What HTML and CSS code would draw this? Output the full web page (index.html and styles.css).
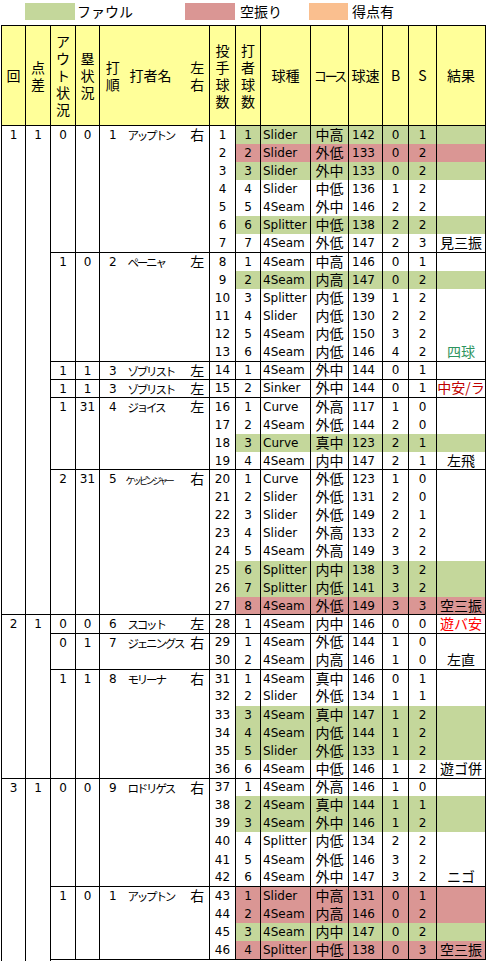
FILE: index.html
```html
<!DOCTYPE html>
<html lang="ja">
<head>
<meta charset="utf-8">
<title>投球記録</title>
<link rel="stylesheet" href="styles.css">
</head>
<body>
<div class="legend">
  <span class="sw sw-foul"></span><span class="lab lab-foul">ファウル</span>
  <span class="sw sw-miss"></span><span class="lab lab-miss">空振り</span>
  <span class="sw sw-score"></span><span class="lab lab-score">得点有</span>
</div>
<table class="sheet">
  <colgroup>
    <col style="width:24px"><col style="width:25px"><col style="width:25px"><col style="width:24px">
    <col style="width:26px"><col style="width:60px"><col style="width:24px"><col style="width:26px">
    <col style="width:25px"><col style="width:50px"><col style="width:38px"><col style="width:34px">
    <col style="width:26px"><col style="width:28px"><col style="width:49px">
  </colgroup>
  <thead>
    <tr>
      <th>回</th><th>点<br>差</th><th>ア<br>ウ<br>ト<br>状<br>況</th><th>塁<br>状<br>況</th>
      <th class="ord">打<br>順</th><th class="nm hn">打者名</th><th class="lr">左<br>右</th>
      <th>投<br>手<br>球<br>数</th><th>打<br>者<br>球<br>数</th><th>球種</th><th class="hc">コース</th>
      <th>球速</th><th>B</th><th>S</th><th>結果</th>
    </tr>
  </thead>
  <tbody>
    <tr class="d gs g"><td class="gc" rowspan="27">1</td><td class="gc" rowspan="27">1</td><td class="gc" rowspan="7">0</td><td class="gc" rowspan="7">0</td><td class="gc ord" rowspan="7">1</td><td class="gc nm" rowspan="7">アップトン</td><td class="gc lr" rowspan="7">右</td><td class="pn">1</td><td>1</td><td class="ty">Slider</td><td class="co">中高</td><td class="sp">142</td><td>0</td><td>1</td><td class="rs"></td></tr>
    <tr class="d r"><td class="pn">2</td><td>2</td><td class="ty">Slider</td><td class="co">外低</td><td class="sp">133</td><td>0</td><td>2</td><td class="rs"></td></tr>
    <tr class="d g"><td class="pn">3</td><td>3</td><td class="ty">Slider</td><td class="co">外中</td><td class="sp">133</td><td>0</td><td>2</td><td class="rs"></td></tr>
    <tr class="d"><td class="pn">4</td><td>4</td><td class="ty">Slider</td><td class="co">中低</td><td class="sp">136</td><td>1</td><td>2</td><td class="rs"></td></tr>
    <tr class="d"><td class="pn">5</td><td>5</td><td class="ty">4Seam</td><td class="co">外中</td><td class="sp">146</td><td>2</td><td>2</td><td class="rs"></td></tr>
    <tr class="d g"><td class="pn">6</td><td>6</td><td class="ty">Splitter</td><td class="co">中低</td><td class="sp">138</td><td>2</td><td>2</td><td class="rs"></td></tr>
    <tr class="d"><td class="pn">7</td><td>7</td><td class="ty">4Seam</td><td class="co">外低</td><td class="sp">147</td><td>2</td><td>3</td><td class="rs">見三振</td></tr>

    <tr class="d gs"><td class="gc" rowspan="6">1</td><td class="gc" rowspan="6">0</td><td class="gc ord" rowspan="6">2</td><td class="gc nm" rowspan="6">ペーニャ</td><td class="gc lr" rowspan="6">左</td><td class="pn">8</td><td>1</td><td class="ty">4Seam</td><td class="co">中高</td><td class="sp">146</td><td>0</td><td>1</td><td class="rs"></td></tr>
    <tr class="d g"><td class="pn">9</td><td>2</td><td class="ty">4Seam</td><td class="co">内高</td><td class="sp">147</td><td>0</td><td>2</td><td class="rs"></td></tr>
    <tr class="d"><td class="pn">10</td><td>3</td><td class="ty">Splitter</td><td class="co">内低</td><td class="sp">139</td><td>1</td><td>2</td><td class="rs"></td></tr>
    <tr class="d"><td class="pn">11</td><td>4</td><td class="ty">Slider</td><td class="co">内低</td><td class="sp">130</td><td>2</td><td>2</td><td class="rs"></td></tr>
    <tr class="d"><td class="pn">12</td><td>5</td><td class="ty">4Seam</td><td class="co">内低</td><td class="sp">150</td><td>3</td><td>2</td><td class="rs"></td></tr>
    <tr class="d"><td class="pn">13</td><td>6</td><td class="ty">4Seam</td><td class="co">内低</td><td class="sp">146</td><td>4</td><td>2</td><td class="rs walk">四球</td></tr>

    <tr class="d gs"><td class="gc">1</td><td class="gc">1</td><td class="gc ord">3</td><td class="gc nm">ゾブリスト</td><td class="gc lr">左</td><td class="pn">14</td><td>1</td><td class="ty">4Seam</td><td class="co">外中</td><td class="sp">144</td><td>0</td><td>1</td><td class="rs"></td></tr>

    <tr class="d gs"><td class="gc">1</td><td class="gc">1</td><td class="gc ord">3</td><td class="gc nm">ゾブリスト</td><td class="gc lr">左</td><td class="pn">15</td><td>2</td><td class="ty">Sinker</td><td class="co">外中</td><td class="sp">144</td><td>0</td><td>1</td><td class="rs hit">中安/ラ</td></tr>

    <tr class="d gs"><td class="gc" rowspan="4">1</td><td class="gc" rowspan="4">31</td><td class="gc ord" rowspan="4">4</td><td class="gc nm" rowspan="4">ジョイス</td><td class="gc lr" rowspan="4">左</td><td class="pn">16</td><td>1</td><td class="ty">Curve</td><td class="co">外高</td><td class="sp">117</td><td>1</td><td>0</td><td class="rs"></td></tr>
    <tr class="d"><td class="pn">17</td><td>2</td><td class="ty">4Seam</td><td class="co">外低</td><td class="sp">144</td><td>2</td><td>0</td><td class="rs"></td></tr>
    <tr class="d g"><td class="pn">18</td><td>3</td><td class="ty">Curve</td><td class="co">真中</td><td class="sp">123</td><td>2</td><td>1</td><td class="rs"></td></tr>
    <tr class="d"><td class="pn">19</td><td>4</td><td class="ty">4Seam</td><td class="co">内中</td><td class="sp">147</td><td>2</td><td>1</td><td class="rs">左飛</td></tr>

    <tr class="d gs"><td class="gc" rowspan="8">2</td><td class="gc" rowspan="8">31</td><td class="gc ord" rowspan="8">5</td><td class="gc nm small" rowspan="8">ケッピンジャー</td><td class="gc lr" rowspan="8">右</td><td class="pn">20</td><td>1</td><td class="ty">Curve</td><td class="co">外低</td><td class="sp">123</td><td>1</td><td>0</td><td class="rs"></td></tr>
    <tr class="d"><td class="pn">21</td><td>2</td><td class="ty">Slider</td><td class="co">外低</td><td class="sp">131</td><td>2</td><td>0</td><td class="rs"></td></tr>
    <tr class="d"><td class="pn">22</td><td>3</td><td class="ty">Slider</td><td class="co">外低</td><td class="sp">149</td><td>2</td><td>1</td><td class="rs"></td></tr>
    <tr class="d"><td class="pn">23</td><td>4</td><td class="ty">Slider</td><td class="co">外高</td><td class="sp">133</td><td>2</td><td>2</td><td class="rs"></td></tr>
    <tr class="d"><td class="pn">24</td><td>5</td><td class="ty">4Seam</td><td class="co">外高</td><td class="sp">149</td><td>3</td><td>2</td><td class="rs"></td></tr>
    <tr class="d g"><td class="pn">25</td><td>6</td><td class="ty">Splitter</td><td class="co">内中</td><td class="sp">138</td><td>3</td><td>2</td><td class="rs"></td></tr>
    <tr class="d g"><td class="pn">26</td><td>7</td><td class="ty">Splitter</td><td class="co">内低</td><td class="sp">141</td><td>3</td><td>2</td><td class="rs"></td></tr>
    <tr class="d r"><td class="pn">27</td><td>8</td><td class="ty">4Seam</td><td class="co">外低</td><td class="sp">149</td><td>3</td><td>3</td><td class="rs">空三振</td></tr>

    <tr class="d gs"><td class="gc" rowspan="9">2</td><td class="gc" rowspan="9">1</td><td class="gc">0</td><td class="gc">0</td><td class="gc ord">6</td><td class="gc nm">スコット</td><td class="gc lr">左</td><td class="pn">28</td><td>1</td><td class="ty">4Seam</td><td class="co">内中</td><td class="sp">146</td><td>0</td><td>0</td><td class="rs safe">遊バ安</td></tr>

    <tr class="d gs"><td class="gc" rowspan="2">0</td><td class="gc" rowspan="2">1</td><td class="gc ord" rowspan="2">7</td><td class="gc nm" rowspan="2">ジェニングス</td><td class="gc lr" rowspan="2">右</td><td class="pn">29</td><td>1</td><td class="ty">4Seam</td><td class="co">外低</td><td class="sp">144</td><td>1</td><td>0</td><td class="rs"></td></tr>
    <tr class="d"><td class="pn">30</td><td>2</td><td class="ty">4Seam</td><td class="co">内高</td><td class="sp">146</td><td>1</td><td>0</td><td class="rs">左直</td></tr>

    <tr class="d gs"><td class="gc" rowspan="6">1</td><td class="gc" rowspan="6">1</td><td class="gc ord" rowspan="6">8</td><td class="gc nm" rowspan="6">モリーナ</td><td class="gc lr" rowspan="6">右</td><td class="pn">31</td><td>1</td><td class="ty">4Seam</td><td class="co">真中</td><td class="sp">146</td><td>0</td><td>1</td><td class="rs"></td></tr>
    <tr class="d"><td class="pn">32</td><td>2</td><td class="ty">Slider</td><td class="co">外低</td><td class="sp">134</td><td>1</td><td>1</td><td class="rs"></td></tr>
    <tr class="d g"><td class="pn">33</td><td>3</td><td class="ty">4Seam</td><td class="co">真中</td><td class="sp">147</td><td>1</td><td>2</td><td class="rs"></td></tr>
    <tr class="d g"><td class="pn">34</td><td>4</td><td class="ty">4Seam</td><td class="co">内低</td><td class="sp">144</td><td>1</td><td>2</td><td class="rs"></td></tr>
    <tr class="d g"><td class="pn">35</td><td>5</td><td class="ty">Slider</td><td class="co">外低</td><td class="sp">133</td><td>1</td><td>2</td><td class="rs"></td></tr>
    <tr class="d"><td class="pn">36</td><td>6</td><td class="ty">4Seam</td><td class="co">中低</td><td class="sp">146</td><td>1</td><td>2</td><td class="rs">遊ゴ併</td></tr>

    <tr class="d gs"><td class="gc" rowspan="11">3</td><td class="gc" rowspan="11">1</td><td class="gc" rowspan="6">0</td><td class="gc" rowspan="6">0</td><td class="gc ord" rowspan="6">9</td><td class="gc nm" rowspan="6">ロドリゲス</td><td class="gc lr" rowspan="6">右</td><td class="pn">37</td><td>1</td><td class="ty">4Seam</td><td class="co">外高</td><td class="sp">146</td><td>1</td><td>0</td><td class="rs"></td></tr>
    <tr class="d g"><td class="pn">38</td><td>2</td><td class="ty">4Seam</td><td class="co">真中</td><td class="sp">144</td><td>1</td><td>1</td><td class="rs"></td></tr>
    <tr class="d g"><td class="pn">39</td><td>3</td><td class="ty">4Seam</td><td class="co">外中</td><td class="sp">146</td><td>1</td><td>2</td><td class="rs"></td></tr>
    <tr class="d"><td class="pn">40</td><td>4</td><td class="ty">Splitter</td><td class="co">内低</td><td class="sp">134</td><td>2</td><td>2</td><td class="rs"></td></tr>
    <tr class="d"><td class="pn">41</td><td>5</td><td class="ty">4Seam</td><td class="co">外低</td><td class="sp">146</td><td>3</td><td>2</td><td class="rs"></td></tr>
    <tr class="d"><td class="pn">42</td><td>6</td><td class="ty">4Seam</td><td class="co">外中</td><td class="sp">147</td><td>3</td><td>2</td><td class="rs">ニゴ</td></tr>

    <tr class="d gs r"><td class="gc" rowspan="4">1</td><td class="gc" rowspan="4">0</td><td class="gc ord" rowspan="4">1</td><td class="gc nm" rowspan="4">アップトン</td><td class="gc lr" rowspan="4">右</td><td class="pn">43</td><td>1</td><td class="ty">Slider</td><td class="co">中高</td><td class="sp">131</td><td>0</td><td>1</td><td class="rs"></td></tr>
    <tr class="d r"><td class="pn">44</td><td>2</td><td class="ty">4Seam</td><td class="co">内高</td><td class="sp">146</td><td>0</td><td>2</td><td class="rs"></td></tr>
    <tr class="d g"><td class="pn">45</td><td>3</td><td class="ty">4Seam</td><td class="co">内中</td><td class="sp">147</td><td>0</td><td>2</td><td class="rs"></td></tr>
    <tr class="d r"><td class="pn">46</td><td>4</td><td class="ty">Splitter</td><td class="co">中低</td><td class="sp">138</td><td>0</td><td>3</td><td class="rs">空三振</td></tr>

    <tr class="tail gs"><td class="tail-cell" colspan="13"></td></tr>
  </tbody>
</table>
</body>
</html>
```

FILE: styles.css
```css
* { box-sizing: border-box; }

html, body {
  overflow: hidden;
}

body {
  margin: 0;
  background: #ffffff;
  color: #000000;
  font-family: "DejaVu Sans", "Noto Sans CJK JP", sans-serif;
  font-size: 12px;
}

/* legend */
.legend {
  display: flex;
  height: 25px;
  padding: 3px 0 5px 25px;
  font-family: "Noto Sans CJK JP", sans-serif;
  font-size: 14px;
  line-height: 17px;
}
.sw { height: 17px; flex: none; }
.lab { flex: none; }
.sw-foul { width: 50px; background: #c4d79b; }
.lab-foul { width: 110px; padding-left: 2px; }
.sw-miss { width: 50px; background: #da9694; }
.lab-miss { width: 74px; padding-left: 5px; }
.sw-score { width: 39px; background: #fabf8f; }
.lab-score { padding-left: 4px; }

/* sheet */
.sheet {
  border-collapse: collapse;
  table-layout: fixed;
  width: 485px;
  margin-left: 1px;
}

.sheet th,
.sheet td {
  padding: 0;
  border-left: 1px solid #000;
  border-right: 1px solid #000;
  border-top: none;
  border-bottom: none;
  text-align: center;
  white-space: nowrap;
  overflow: hidden;
}

.sheet th {
  height: 100px;
  background: #ffff99;
  font-family: "Noto Sans CJK JP", sans-serif;
  font-size: 14px;
  line-height: 17px;
  font-weight: normal;
  vertical-align: middle;
  border-top: 1px solid #000;
  border-bottom: 1px solid #000;
}

.sheet .ord { border-right: none; }
.sheet .nm { border-left: none; border-right: none; }
.sheet .lr { border-left: none; }

.sheet th.hn { padding-right: 10px; }
.sheet th.hc { font-feature-settings: "palt"; letter-spacing: -2px; font-size: 13px; }

.sheet tr.d { height: 18.13px; }
.sheet td {
  line-height: 16px;
  vertical-align: middle;
}

.sheet tr.gs td { border-top: 1px solid #000; }

.sheet td.gc {
  vertical-align: top;
  padding-top: 1px;
}

.sheet td.nm {
  font-family: "Noto Sans CJK JP", sans-serif;
  font-size: 11.5px;
  letter-spacing: -2.2px;
  text-align: left;
  padding-left: 2px;
  overflow: visible;
}
.sheet td.nm.small {
  font-size: 9.5px;
  letter-spacing: -2.8px;
  padding-left: 0;
  padding-top: 2px;
}
.sheet td.lr {
  font-family: "Noto Sans CJK JP", sans-serif;
  font-size: 14px;
  padding-top: 0;
}

.sheet td.ty { text-align: left; padding-left: 2px; }
.sheet td.sp { text-align: left; padding-left: 3px; }
.sheet td.co,
.sheet td.rs {
  font-family: "Noto Sans CJK JP", sans-serif;
  font-size: 14px;
  line-height: 14px;
  padding-bottom: 2px;
  overflow: visible;
}

.sheet td.walk { color: #2e9460; }
.sheet td.hit { color: #c00000; }
.sheet td.safe { color: #ff0000; }

/* pitch highlight: from 打者球数 column to the end */
.sheet tr.g td.pn ~ td { background: #c4d79b; }
.sheet tr.r td.pn ~ td { background: #da9694; }

.sheet tr.tail { height: 4px; }
.sheet td.tail-cell { border-right: none; }
```
